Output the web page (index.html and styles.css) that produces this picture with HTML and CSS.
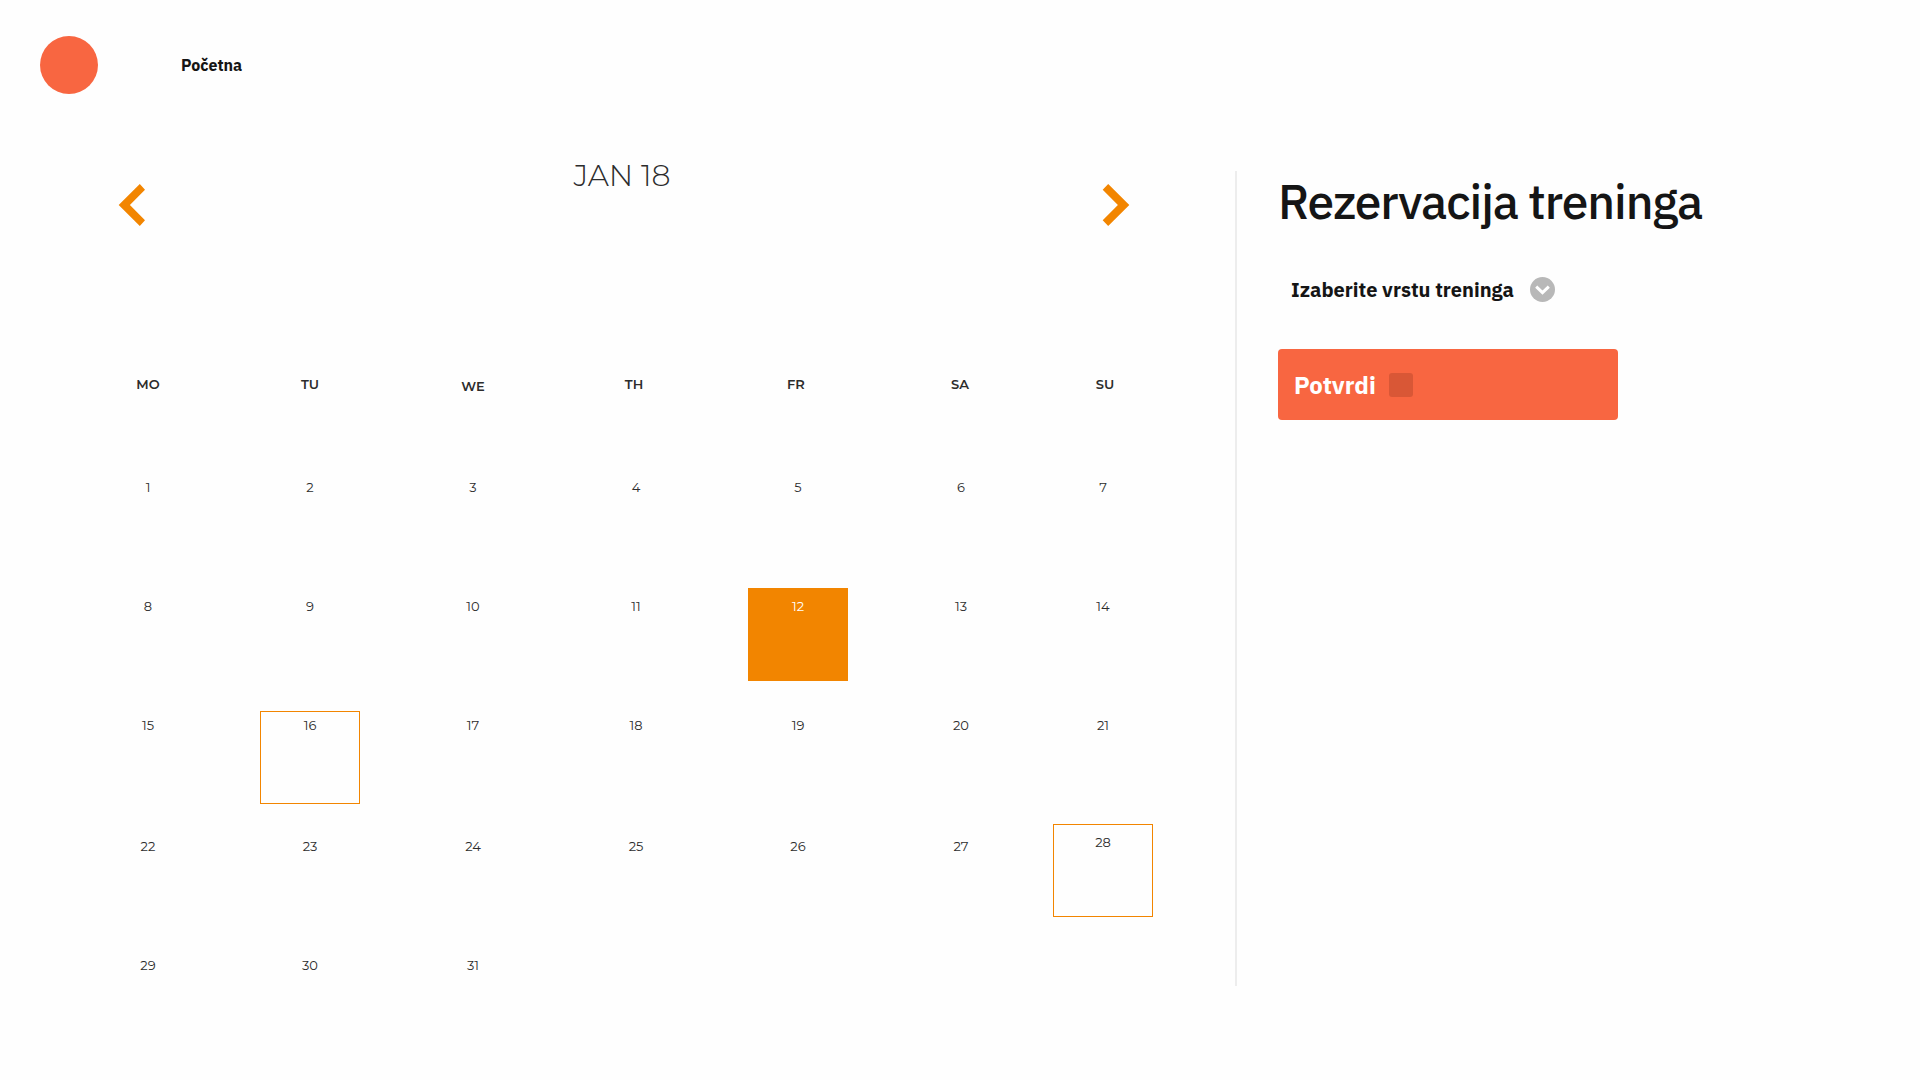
FILE: index.html
```html
<!DOCTYPE html>
<html lang="sr-Latn">
<head>
<meta charset="utf-8">
<title>Rezervacija treninga</title>
<link rel="stylesheet" href="styles.css">
</head>
<body>
<header class="topbar">
  <span class="logo"></span>
  <nav><a class="nav-link">Početna</a></nav>
</header>
<main class="content">
  <section class="calendar">
    <div class="month-bar">
      <svg class="arrow" width="26" height="42" viewBox="0 0 26 42"><path d="M20.8 0-.3 21 20.8 42 26 36.3 10.9 21 26 5.7Z"/></svg>
      <h2 class="month">JAN 18</h2>
      <svg class="arrow" width="26" height="42" viewBox="0 0 26 42"><path d="M5.2 0 26.3 21 5.2 42-.3 36.3 14.9 21-.3 5.7Z"/></svg>
    </div>
    <div class="weekdays">
      <span>MO</span><span>TU</span><span class="low">WE</span><span>TH</span><span>FR</span><span>SA</span><span>SU</span>
    </div>
    <div class="days">
      <span class="day">1</span><span class="day">2</span><span class="day">3</span><span class="day">4</span><span class="day">5</span><span class="day">6</span><span class="day">7</span>
      <span class="day">8</span><span class="day">9</span><span class="day">10</span><span class="day">11</span><span class="day selected">12</span><span class="day">13</span><span class="day">14</span>
      <span class="day">15</span><span class="day outlined lowered">16</span><span class="day">17</span><span class="day">18</span><span class="day">19</span><span class="day">20</span><span class="day">21</span>
      <span class="day">22</span><span class="day">23</span><span class="day">24</span><span class="day">25</span><span class="day">26</span><span class="day">27</span><span class="day outlined raised">28</span>
      <span class="day">29</span><span class="day">30</span><span class="day">31</span>
    </div>
  </section>
  <section class="booking">
    <h1 class="title">Rezervacija treninga</h1>
    <div class="select">
      <span class="select-label">Izaberite vrstu treninga</span>
      <svg width="25" height="25" viewBox="0 0 25 25"><circle cx="12.5" cy="12.5" r="12.5" fill="#b8b8b8"/><path d="M6.2 9.6 12.5 15.6 18.8 9.6" fill="none" stroke="#fff" stroke-width="3"/></svg>
    </div>
    <button class="confirm"><span class="confirm-label">Potvrdi</span><span class="confirm-icon"></span></button>
  </section>
</main>
</body>
</html>
```
FILE: styles.css
```css
* { box-sizing: border-box; }
body {
  margin: 0;
  height: 1080px;
  overflow: hidden;
  background: #fefefe;
  color: #151515;
  font-family: "IBM Plex Sans", "Open Sans", sans-serif;
}
h1, h2 { margin: 0; }
svg { display: block; flex: none; overflow: visible; }

.topbar { display: flex; align-items: center; gap: 82px; height: 130px; padding-left: 40px; }
.logo { width: 58px; height: 58px; border-radius: 50%; background: #f86641; }
.nav-link { display: block; padding-left: 1px; font-size: 16px; font-weight: 700; line-height: 20px; }

.content { display: flex; padding-top: 41px; }
.calendar {
  width: 1237px;
  height: 815px;
  padding-left: 98px;
  border-right: 2px solid #ededed;
  color: #2c2c2c;
  font-family: "Montserrat", "Inter", sans-serif;
}
.month-bar { display: flex; justify-content: space-between; width: 1010px; height: 200px; margin-left: 21px; }
.arrow { margin-top: 13px; fill: #f28500; }
.month { margin-top: -16px; padding-right: 4px; font-size: 30px; font-weight: 300; line-height: 42px; }

.weekdays {
  display: grid;
  grid-template-columns: 162px 163px 161px 162px 164px 145px 100px;
  height: 97px;
  font-size: 13px;
  font-weight: 600;
  line-height: 27px;
}
.weekdays span { width: 100px; text-align: center; }
.weekdays .low { padding-top: 2px; }

.days {
  display: grid;
  grid-template-columns: 162px 163px 163px 162px 163px 142px 100px;
  grid-template-rows: 119px 119px 121px 119px 93px;
  padding-top: 1px;
}
.day { width: 100px; height: 93px; padding-top: 8px; font-size: 13px; line-height: 20px; text-align: center; }
.selected { background: #f28500; color: #fff; }
.outlined { border: 1px solid #f28500; }
.lowered { margin-top: 4px; padding-top: 3px; }
.raised { margin-top: -4px; padding-top: 7px; }

.booking { width: 460px; padding-left: 41px; }
.title { height: 62px; font-size: 48px; font-weight: 500; line-height: 61px; letter-spacing: -1.1px; white-space: nowrap; }
.select { display: flex; align-items: center; justify-content: space-between; width: 264px; height: 25px; margin: 44px 0 47px 13px; }
.select-label { font-size: 20px; font-weight: 700; white-space: nowrap; }
.confirm {
  display: flex;
  align-items: center;
  gap: 13px;
  width: 340px;
  height: 71px;
  padding: 0 0 0 16px;
  border: 0;
  border-radius: 4px;
  background: #f86641;
  color: #fff;
  font: 700 24px "IBM Plex Sans", "Open Sans", sans-serif;
}
.confirm-icon { width: 24px; height: 24px; border-radius: 3px; background: #d95736; }
```
